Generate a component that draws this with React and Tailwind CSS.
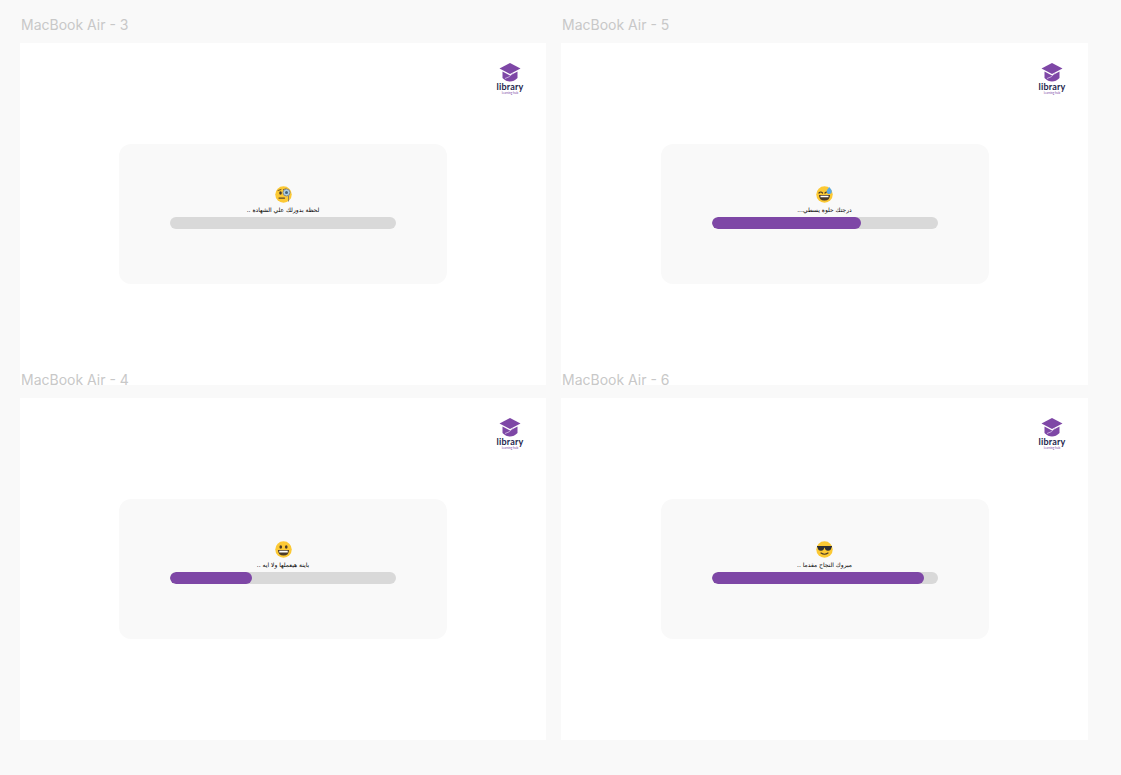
const frames = [
  { label: "MacBook Air - 3", text: "لحظة بدورلك علي الشهادة ..", emoji: "monocle", progress: 0 },
  { label: "MacBook Air - 5", text: "درجتك حلوة يسطي...", emoji: "sweat", progress: 149 },
  { label: "MacBook Air - 4", text: "باينة هيعملها ولا ايه ..", emoji: "grin", progress: 82 },
  { label: "MacBook Air - 6", text: "مبروك النجاح مقدما ..", emoji: "shades", progress: 212 },
];

function Emoji({ type }) {
  return (
    <svg width="17" height="17" viewBox="0 0 34 34" className="block">
      <circle cx="17" cy="17" r="16.5" fill="#fcc934" />
      {type === "monocle" && (
        <>
          <path d="M6 9l6-2M17 7l5-1" stroke="#7a5a20" strokeWidth="2" strokeLinecap="round" />
          <ellipse cx="11" cy="14" rx="2.6" ry="3.4" fill="#4a3a28" />
          <path d="M8 24h11" stroke="#5a4526" strokeWidth="2.5" strokeLinecap="round" />
          <path d="M27 20v11" stroke="#6f6f6f" strokeWidth="1.6" />
          <circle cx="23" cy="13" r="7" fill="#a9cfe8" stroke="#8a8a8a" strokeWidth="2" />
          <circle cx="23" cy="13" r="3" fill="#47617a" />
        </>
      )}
      {type === "sweat" && (
        <>
          <path d="M6 14q3.500-4 7 0M18 14q3.500-4 7 0" stroke="#4a3a28" strokeWidth="2.400" fill="none" strokeLinecap="round" />
          <path d="M6 18h22q0 11-11 11T6 18z" fill="#4a3a28" />
          <path d="M9 19.500h16v3H9z" fill="#fff" />
          <path d="M26.500 2q5 5.500 5 9a5 5 0 0 1-10 0q0-3.500 5-9z" fill="#5aa9e6" />
        </>
      )}
      {type === "grin" && (
        <>
          <ellipse cx="11.500" cy="12" rx="2.600" ry="3.600" fill="#4a3a28" />
          <ellipse cx="22.500" cy="12" rx="2.600" ry="3.600" fill="#4a3a28" />
          <path d="M6 18h22q0 11-11 11T6 18z" fill="#4a3a28" />
          <path d="M8.500 19.500h17v3.500h-17z" fill="#fff" />
        </>
      )}
      {type === "shades" && (
        <>
          <path d="M2 10h30v2.500h-1q-1 7-7 7-5.500 0-6.500-6h-1q-1 6-6.500 6-6 0-7-7H2z" fill="#2f2f33" />
          <path d="M10 24q7 5 14 0" stroke="#4a3a28" strokeWidth="2.400" fill="none" strokeLinecap="round" />
        </>
      )}
    </svg>
  );
}

function Logo() {
  return (
    <div className="flex flex-col items-center w-[28px] self-end mr-[22px]">
      <svg width="22" height="19" viewBox="0 0 22 19" className="block">
        <path d="M11 0l10.500 5.500L11 11 .5 5.500z" fill="#7e47a6" />
        <path d="M3.500 8.500L11 12.500l7.500-4v6.500Q15 18.500 11 18.500T3.500 15z" fill="#7e47a6" />
        <path d="M6 15.500q5-1 8-5.500" stroke="#d9c4e8" strokeWidth=".8" fill="none" />
      </svg>
      <div className="text-[9px] leading-[9px] font-bold text-[#241f4d] font-['Lato',sans-serif] tracking-[0.2px]">library</div>
      <div className="text-[3px] leading-[4px] text-[#7e47a6] font-['Lato',sans-serif]">learning hub</div>
    </div>
  );
}

function Frame({ label, text, emoji, progress }) {
  return (
    <div className="mb-[-12px]">
      <div className="h-[25px] text-[14px] leading-[14px] text-[#c8c8c8] pl-[1px] font-['Inter',sans-serif]">{label}</div>
      <div className="h-[342px] bg-white pt-[20px] flex flex-col">
        <Logo />
        <div className="w-[328px] h-[140px] mt-[49px] mx-auto bg-[#f9f9f9] rounded-[12px] flex flex-col items-center pt-[42px]">
          <Emoji type={emoji} />
          <div dir="rtl" className="h-[14px] text-[6px] leading-[14px] text-black font-['DejaVu_Sans',sans-serif]">{text}</div>
          <div className="w-[226px] h-[12px] rounded-full bg-[#d9d9d9] overflow-hidden">
            <div className="h-full rounded-full bg-[#7e47a6]" style={{ width: progress }} />
          </div>
        </div>
      </div>
    </div>
  );
}

export default function App() {
  return (
    <div className="w-[1121px] h-[775px] overflow-hidden bg-[#f9f9f9] pl-[20px] pt-[18px]">
      <div className="grid grid-cols-[526px_527px] gap-x-[15px]">
        {frames.map((f) => (
          <Frame key={f.label} {...f} />
        ))}
      </div>
    </div>
  );
}
